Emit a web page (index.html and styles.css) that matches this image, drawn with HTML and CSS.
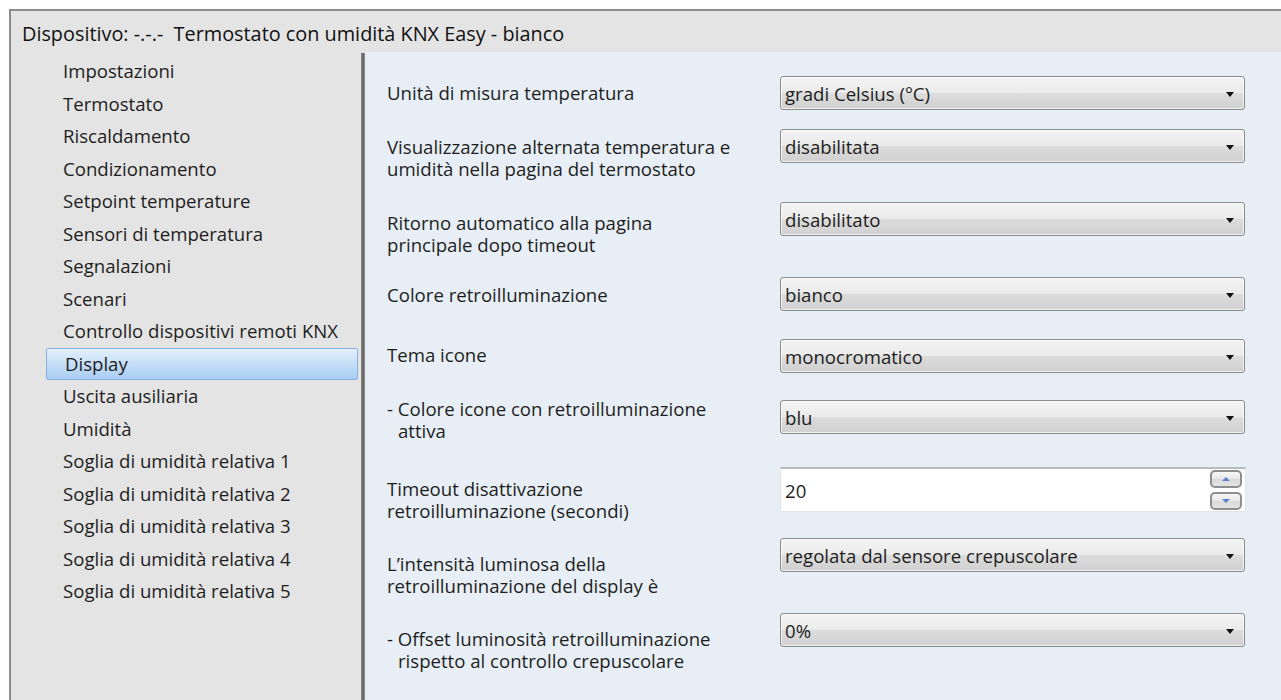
FILE: index.html
```html
<!DOCTYPE html>
<html lang="it">
<head>
<meta charset="utf-8">
<title>Dispositivo - Display</title>
<link rel="stylesheet" href="styles.css">
</head>
<body>
<div class="window">
  <div class="title">Dispositivo: -.-.-&nbsp; Termostato con umidità KNX Easy - bianco</div>
  <div class="body">
    <nav class="nav">
      <ul>
        <li>Impostazioni</li>
        <li>Termostato</li>
        <li>Riscaldamento</li>
        <li>Condizionamento</li>
        <li>Setpoint temperature</li>
        <li>Sensori di temperatura</li>
        <li>Segnalazioni</li>
        <li>Scenari</li>
        <li>Controllo dispositivi remoti KNX</li>
        <li class="selected">Display</li>
        <li>Uscita ausiliaria</li>
        <li>Umidità</li>
        <li>Soglia di umidità relativa 1</li>
        <li>Soglia di umidità relativa 2</li>
        <li>Soglia di umidità relativa 3</li>
        <li>Soglia di umidità relativa 4</li>
        <li>Soglia di umidità relativa 5</li>
      </ul>
    </nav>
    <div class="splitter"></div>
    <section class="params">
      <div class="row">
        <div class="label">Unità di misura temperatura</div>
        <div class="combo"><span>gradi Celsius (°C)</span><i class="arrow"></i></div>
      </div>
      <div class="row">
        <div class="label"><span>Visualizzazione alternata temperatura e</span><span>umidità nella pagina del termostato</span></div>
        <div class="combo"><span>disabilitata</span><i class="arrow"></i></div>
      </div>
      <div class="row">
        <div class="label"><span>Ritorno automatico alla pagina</span><span>principale dopo timeout</span></div>
        <div class="combo"><span>disabilitato</span><i class="arrow"></i></div>
      </div>
      <div class="row">
        <div class="label">Colore retroilluminazione</div>
        <div class="combo"><span>bianco</span><i class="arrow"></i></div>
      </div>
      <div class="row">
        <div class="label">Tema icone</div>
        <div class="combo"><span>monocromatico</span><i class="arrow"></i></div>
      </div>
      <div class="row">
        <div class="label"><span>- Colore icone con retroilluminazione</span><span class="indent">attiva</span></div>
        <div class="combo"><span>blu</span><i class="arrow"></i></div>
      </div>
      <div class="row">
        <div class="label"><span>Timeout disattivazione</span><span>retroilluminazione (secondi)</span></div>
        <div class="spin">
          <span class="spin-value">20</span>
          <div class="spin-buttons">
            <div class="spin-btn"><i class="tri-up"></i></div>
            <div class="spin-btn"><i class="tri-down"></i></div>
          </div>
        </div>
      </div>
      <div class="row">
        <div class="label"><span>L’intensità luminosa della</span><span>retroilluminazione del display è</span></div>
        <div class="combo"><span>regolata dal sensore crepuscolare</span><i class="arrow"></i></div>
      </div>
      <div class="row">
        <div class="label"><span>- Offset luminosità retroilluminazione</span><span class="indent">rispetto al controllo crepuscolare</span></div>
        <div class="combo"><span>0%</span><i class="arrow"></i></div>
      </div>
    </section>
  </div>
</div>
</body>
</html>
```
FILE: styles.css
```css
html, body {
  margin: 0;
  height: 100%;
}

body {
  background: #ffffff;
  font-family: "Open Sans", "Noto Sans", sans-serif;
  font-size: 18.6px;
  color: #1e1e1e;
  overflow: hidden;
}

.window {
  margin: 9px 0 0 9px;
  height: calc(100% - 9px);
  box-sizing: border-box;
  border-top: 2px solid #8c8c8c;
  border-left: 2px solid #8c8c8c;
  background: #e4e4e4;
  display: flex;
  flex-direction: column;
}

.title {
  height: 41px;
  box-sizing: border-box;
  padding: 12px 0 0 11px;
  font-size: 19.85px;
  line-height: 22px;
  white-space: nowrap;
  color: #111;
}

.body {
  flex: 1;
  display: flex;
  min-height: 0;
}

/* left navigation tree */
.nav {
  width: 350px;
  flex: none;
}

.nav ul {
  list-style: none;
  margin: 0;
  padding: 3px 3px 0 35px;
}

.nav li {
  height: 32.5px;
  box-sizing: border-box;
  border: 1px solid transparent;
  border-radius: 2px;
  padding-left: 16px;
  line-height: 29px;
  white-space: nowrap;
}

.nav li.selected {
  border-color: #86b1e0;
  background: linear-gradient(#e4f0fd, #a9cdf3);
  padding-left: 18px;
}

.splitter {
  width: 4px;
  flex: none;
  margin-top: 1px;
  background: linear-gradient(90deg, #8a8a8a, #6a6a6a 40%, #6a6a6a 70%, #9a9a9a);
}

/* parameter pane */
.params {
  flex: 1;
  background: #e7eef5;
  padding: 24px 0 0 22px;
}

.row {
  display: grid;
  grid-template-columns: 393px 465px;
  align-items: start;
  height: 75px;
}

.row:nth-child(1) { height: 54px; }
.row:nth-child(2) { height: 76px; }
.row:nth-child(3) { height: 72px; }
.row:nth-child(4) { height: 60px; }
.row:nth-child(5) { height: 54px; }
.row:nth-child(6) { height: 80px; }

.label {
  padding-top: 6px;
  line-height: 22px;
  white-space: nowrap;
}

.label span {
  display: block;
  height: 22px;
}

.label span.indent {
  padding-left: 11px;
}

.combo {
  height: 34px;
  box-sizing: border-box;
  border: 1px solid #8b8b8b;
  border-radius: 3px;
  background: linear-gradient(#f3f3f3 0%, #ebebeb 48%, #dcdcdc 52%, #d0d0d0 100%);
  display: flex;
  align-items: center;
  padding: 0 10px 0 4px;
  box-shadow: inset 0 0 0 1px rgba(255, 255, 255, 0.7);
}

/* controls that sit a little off their label's first line */
.row:nth-child(2) .combo { margin-top: -1px; }
.row:nth-child(3) .combo { margin-top: -4px; }
.row:nth-child(4) .combo { margin-top: -1px; }
.row:nth-child(5) .combo { margin-top: 1px; }
.row:nth-child(6) .combo { margin-top: 8px; }
.row:nth-child(8) .combo { margin-top: -9px; }
.row:nth-child(9) .combo { margin-top: -9px; }

.combo span {
  flex: 1;
  white-space: nowrap;
}

.arrow {
  width: 0;
  height: 0;
  border-left: 4px solid transparent;
  border-right: 4px solid transparent;
  border-top: 5px solid #111;
  margin-top: 2px;
}

/* numeric field with up/down buttons */
.spin {
  margin-top: -5px;
  width: 466px;
  height: 45px;
  box-sizing: border-box;
  background: #ffffff;
  border: 1px solid #e2e6ea;
  border-top: 2px solid #b8bcc0;
  display: flex;
  align-items: center;
  padding: 0 3px 0 4px;
}

.spin-value {
  flex: 1;
}

.spin-buttons {
  display: flex;
  flex-direction: column;
  gap: 4px;
}

.spin-btn {
  width: 32px;
  height: 18px;
  box-sizing: border-box;
  border: 2px solid #8e8e8e;
  border-radius: 5px;
  background: linear-gradient(#f7f7f7, #e8e8e8 50%, #dadada 51%, #e4e4e4);
  display: flex;
  align-items: center;
  justify-content: center;
}

.tri-up, .tri-down {
  width: 0;
  height: 0;
  border-left: 4px solid transparent;
  border-right: 4px solid transparent;
}

.tri-up { border-bottom: 4px solid #5c80cf; }
.tri-down { border-top: 4px solid #5c80cf; }
```
